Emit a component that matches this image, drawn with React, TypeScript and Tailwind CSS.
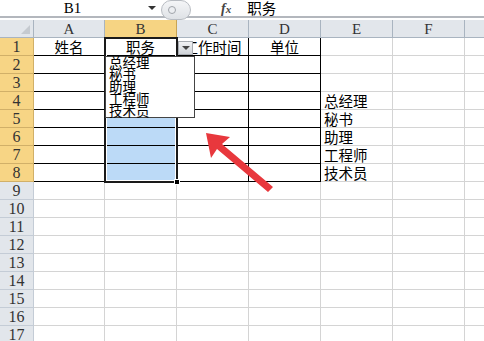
import React from "react";

const cols = ["A", "B", "C", "D", "E", "F", ""];
const cjk = '"Noto Sans CJK SC", "Noto Sans", sans-serif';
const serif = '"Liberation Serif", "DejaVu Serif", serif';

const data: Record<string, string> = {
  "1-0": "姓名",
  "1-1": "职务",
  "1-2": "工作时间",
  "1-3": "单位",
  "4-4": "总经理",
  "5-4": "秘书",
  "6-4": "助理",
  "7-4": "工程师",
  "8-4": "技术员",
};

function Cell({ r, c }: { r: number; c: number }) {
  const inTable = r >= 1 && r <= 8 && c <= 3;
  const blue = c === 1 && r >= 2 && r <= 8;
  const txt = data[`${r}-${c}`];
  const left = c === 4;
  return (
    <div
      className={
        "h-[18px] border-r border-b box-border overflow-hidden whitespace-nowrap text-[14.5px] leading-[17px] text-black " +
        (inTable ? "border-black " : "border-[#d4d4d4] ") +
        (blue ? "bg-[#bcdaf7] " : "bg-white ") +
        (left ? "text-left pl-[3px]" : "text-center")
      }
      style={{ fontFamily: cjk }}
    >
      {txt}
    </div>
  );
}

export default function App() {
  const rows = Array.from({ length: 17 }, (_, i) => i + 1);
  return (
    <div className="relative w-[484px] h-[341px] overflow-hidden bg-white">
      {/* formula bar */}
      <div className="h-[20px] flex flex-col">
        <div className="h-[16px] flex items-center relative">
          <div className="w-[145px] text-center text-[15px] leading-[16px] text-black" style={{ fontFamily: serif }}>
            B1
          </div>
          <div className="w-0 h-0 border-l-[4px] border-r-[4px] border-t-[4px] border-l-transparent border-r-transparent border-t-[#333] ml-[3px]" />
          <div className="ml-[5px] w-[30px] h-[20px] mt-[3px] rounded-full border border-[#b8bcc2] bg-gradient-to-b from-[#f4f5f7] to-[#dfe2e6] flex items-center pl-[6px]">
            <div className="w-[8px] h-[8px] rounded-full border border-[#a0a4aa] bg-[#eceef1]" />
          </div>
          <div className="ml-[30px] text-[14px] italic font-bold text-[#444]" style={{ fontFamily: serif }}>
            f<span className="text-[11px]">x</span>
          </div>
          <div className="ml-[16px] text-[14.5px] leading-[16px] text-black" style={{ fontFamily: cjk }}>
            职务
          </div>
        </div>
        <div className="h-[2px] bg-[#b3b7bd]" />
        <div className="h-[2px] bg-white" />
      </div>

      {/* grid */}
      <div className="grid grid-cols-[34px_71px_72px_72px_72px_72px_72px_40px]">
        {/* header row */}
        <div className="h-[18px] border-r border-b border-[#a9b4c0] bg-[#e2e6eb] box-border relative">
          <div className="absolute right-[3px] bottom-[3px] w-0 h-0" style={{ borderBottom: "9px solid #c5cad0", borderLeft: "9px solid transparent" }} />
        </div>
        {cols.map((c, i) => (
          <div
            key={i}
            className={
              "h-[18px] border-r border-b box-border text-center text-[15px] leading-[18px] text-[#333] " +
              (i === 1 ? "bg-[#f6d483] border-[#c8a454]" : "bg-[#e2e6eb] border-[#a9b4c0]")
            }
            style={{ fontFamily: serif }}
          >
            {c}
          </div>
        ))}
        {rows.map((r) => (
          <React.Fragment key={r}>
            <div
              className={
                "h-[18px] border-r border-b box-border text-center text-[16px] leading-[18px] text-[#333] " +
                (r <= 8 ? "bg-[#f7d585] border-[#d1b068]" : "bg-[#e2e6eb] border-[#c4ccd6]")
              }
              style={{ fontFamily: serif }}
            >
              {r}
            </div>
            {cols.map((_, c) => (
              <Cell key={c} r={r} c={c} />
            ))}
          </React.Fragment>
        ))}
      </div>

      {/* selection outline B1:B8 */}
      <div className="absolute left-[104px] top-[37px] w-[74px] h-[146px] border-2 border-[#1a1a1a] pointer-events-none">
        <div className="w-full h-full border border-white" />
      </div>
      <div className="absolute left-[174px] top-[179px] w-[6px] h-[6px] bg-black border border-white" />

      {/* dropdown button */}
      <div className="absolute left-[178px] top-[41px] w-[15px] h-[14px] border border-[#a8acb2] bg-gradient-to-b from-[#f1f2f4] to-[#cfd3d8] flex items-center justify-center">
        <div className="w-0 h-0 border-l-[4px] border-r-[4px] border-t-[4px] border-l-transparent border-r-transparent border-t-[#444]" />
      </div>

      {/* dropdown list */}
      <div
        className="absolute left-[105px] top-[56px] w-[90px] h-[62px] bg-white border border-[#444] pl-[3px] text-[13.5px] text-black"
        style={{ fontFamily: cjk }}
      >
        {["总经理", "秘书", "助理", "工程师", "技术员"].map((t) => (
          <div key={t} className="h-[12px] leading-[11px]">
            {t}
          </div>
        ))}
      </div>

      {/* red arrow */}
      <svg className="absolute left-0 top-0 pointer-events-none" width="484" height="341">
        <polygon
          points="206,133 230,137 222,144 273,187 268,192 217,149 211,158"
          fill="#e8383d"
        />
      </svg>
    </div>
  );
}
